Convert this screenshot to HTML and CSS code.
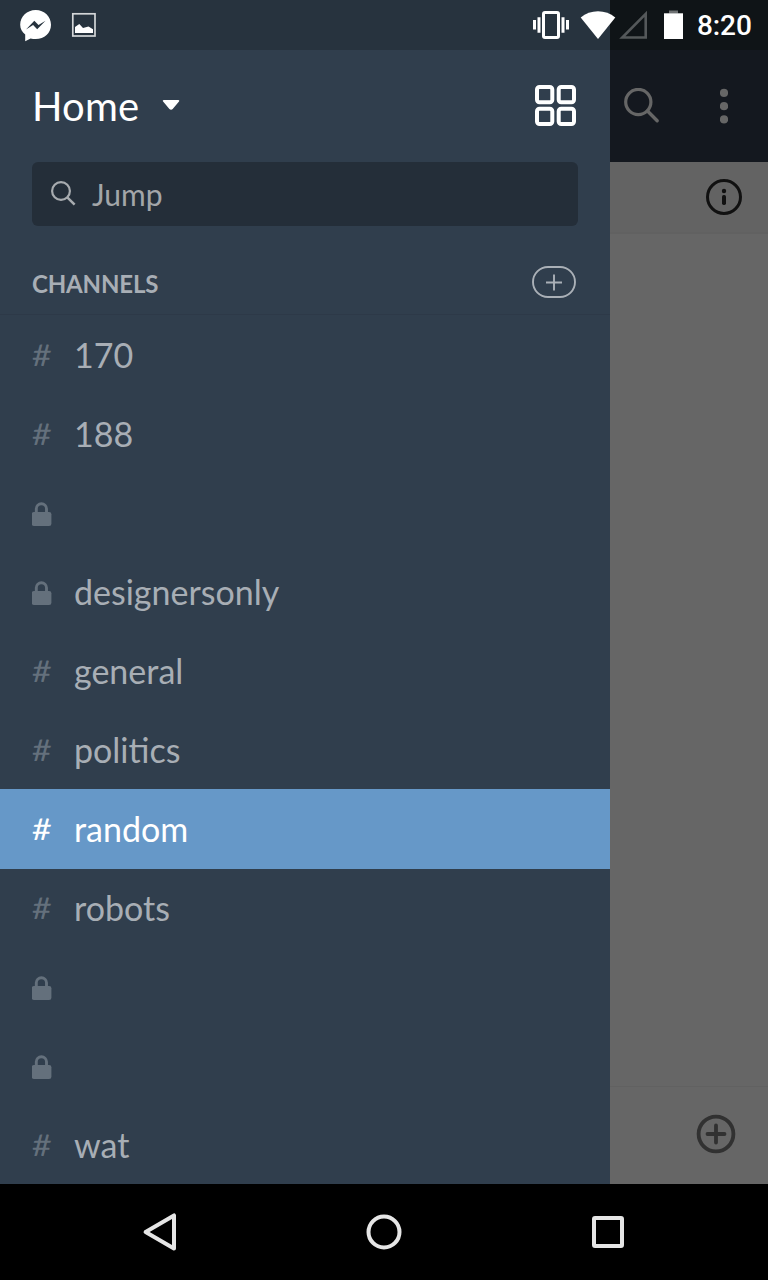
FILE: index.html
```html
<!DOCTYPE html>
<html lang="en">
<head>
<meta charset="utf-8">
<title>Channels</title>
<link rel="stylesheet" href="styles.css">
</head>
<body>
<svg class="defs" width="0" height="0" aria-hidden="true">
  <symbol id="lock" viewBox="0 0 20 24">
    <path d="M4.300 11V6.800a5.100 5.100 0 0 1 10.200 0v4.200" fill="none" stroke="currentColor" stroke-width="2.900"/>
    <rect x="-0.300" y="10" width="19.700" height="14" rx="2.300" fill="currentColor"/>
  </symbol>
</svg>
<header class="status">
  <svg class="status-left" width="80" height="50" viewBox="20 0 80 50">
    <path fill="#fff" d="M35.700 10C27 10 20.200 16.400 20.200 24.700c0 4 1.900 7.400 5 9.900v6.700l5.400-2.800c1.600.4 3.300.6 5.100.6 8.700 0 15.300-6.200 15.300-14.400S44.400 10 35.700 10z"/>
    <path fill="#27333e" d="M26 29.500l8.300-8.800 4.200 4.200 7-4.200-8.300 8.500-4.100-4.200z"/>
    <rect x="72.800" y="13.800" width="22.200" height="22.200" fill="none" stroke="#d3d6d8" stroke-width="1.700"/>
    <path fill="#fff" d="M75 33v-6l4.300-3 3.700 4 5.500-1.500 4.500 2.700V33z"/>
  </svg>
  <svg class="status-right" width="154" height="50" viewBox="532 0 154 50">
    <rect x="543.500" y="12.500" width="15" height="25" rx="1.500" fill="none" stroke="#fff" stroke-width="3"/>
    <path d="M534.500 20v9.500M567.500 20v9.500" stroke="#fff" stroke-width="3"/>
    <path d="M539 17.300v15.500M563 17.300v15.500" stroke="#fff" stroke-width="3"/>
    <path fill="#fff" d="M598 39l-17.300-21.500c9.500-8.500 25.100-8.500 34.600 0z"/>
    <path fill="none" stroke="#54585a" stroke-width="2.600" d="M622.300 37.500H645.700V13.800z"/>
    <path fill="#6f7274" d="M669 10.500h9v3h-9z"/>
    <path fill="#fff" d="M664 13.300h19V39h-19z"/>
  </svg>
  <span class="clock">8:20</span>
</header>
<main class="app">
  <aside class="drawer">
    <div class="team">
      <span class="team-name">Home</span>
      <svg class="caret" width="18" height="12" viewBox="0 0 18 12"><path fill="#fff" d="M1.800 1h14.500c1 0 1.300.9.700 1.600l-6.300 7.400c-.9 1-2.400 1-3.300 0L1.100 2.600C.5 1.900.8 1 1.800 1z"/></svg>
      <svg class="grid-icon" width="42" height="42" viewBox="0 0 42 42" fill="none" stroke="#fff" stroke-width="4">
        <rect x="2" y="2" width="15.300" height="15.300" rx="2.500"/><rect x="23.700" y="2" width="15.300" height="15.300" rx="2.500"/>
        <rect x="2" y="23.700" width="15.300" height="15.300" rx="2.500"/><rect x="23.700" y="23.700" width="15.300" height="15.300" rx="2.500"/>
      </svg>
    </div>
    <div class="jump">
      <svg width="26" height="26" viewBox="0 0 26 26" fill="none" stroke="#a8acb0" stroke-width="2.200"><circle cx="11" cy="10" r="8.900"/><path d="M17.300 16.300l7.300 7.300" stroke-width="2.500"/></svg>
      <span>Jump</span>
    </div>
    <div class="section">
      <h2>CHANNELS</h2>
      <svg width="44" height="32" viewBox="0 0 44 32" fill="none" stroke="#aab0b7" stroke-width="1.900"><rect x="1" y="1" width="42" height="30" rx="15"/><path d="M14 16.500h16M22 8.500v16"/></svg>
    </div>
    <ul class="channels">
      <li><span class="hash">#</span><span class="name">170</span></li>
      <li><span class="hash">#</span><span class="name">188</span></li>
      <li><svg class="lock"><use href="#lock"/></svg></li>
      <li><svg class="lock"><use href="#lock"/></svg><span class="name">designersonly</span></li>
      <li><span class="hash">#</span><span class="name">general</span></li>
      <li><span class="hash">#</span><span class="name">politics</span></li>
      <li class="active"><span class="hash">#</span><span class="name">random</span></li>
      <li><span class="hash">#</span><span class="name">robots</span></li>
      <li><svg class="lock"><use href="#lock"/></svg></li>
      <li><svg class="lock"><use href="#lock"/></svg></li>
      <li><span class="hash">#</span><span class="name">wat</span></li>
    </ul>
  </aside>
  <section class="behind">
    <div class="toolbar">
      <svg width="36" height="36" viewBox="0 0 36 36" fill="none" stroke="#666" stroke-width="3.200"><circle cx="14.300" cy="14" r="12.600"/><path d="M23.500 23l9.700 9.700" stroke-width="3.400" stroke-linecap="round"/></svg>
      <svg width="8" height="36" viewBox="0 0 8 36" fill="#666"><circle cx="4" cy="4.800" r="4.100"/><circle cx="4" cy="18.100" r="4.100"/><circle cx="4" cy="31.400" r="4.100"/></svg>
    </div>
    <div class="topic">
      <svg width="36" height="36" viewBox="0 0 36 36"><circle cx="18" cy="18" r="16.500" fill="none" stroke="#111" stroke-width="3"/><circle cx="18" cy="12" r="2.200" fill="#111"/><rect x="16" y="16" width="4" height="10" rx="1.700" fill="#111"/></svg>
    </div>
    <div class="messages"></div>
    <div class="composer">
      <svg width="40" height="40" viewBox="0 0 40 40" fill="none" stroke="#313131" stroke-width="3.800"><circle cx="20" cy="20" r="17.400"/><path d="M11.500 20h17M20 11.500v17" stroke-linecap="round"/></svg>
    </div>
  </section>
</main>
<nav class="navbar">
  <svg width="34" height="40" viewBox="-1 0 34 40"><path d="M2.600 20L31 3.400v33.200z" fill="none" stroke="#e6e6e6" stroke-width="4" stroke-linejoin="round"/></svg>
  <svg width="36" height="36" viewBox="0 0 36 36"><circle cx="18" cy="18" r="15.500" fill="none" stroke="#e6e6e6" stroke-width="4"/></svg>
  <svg width="32" height="32" viewBox="0 0 32 32"><rect x="2" y="2" width="28" height="28" rx="1" fill="none" stroke="#e6e6e6" stroke-width="4"/></svg>
</nav>
</body>
</html>
```
FILE: styles.css
```css
* { box-sizing: border-box; }

body {
  margin: 0;
  width: 768px;
  height: 1280px;
  display: flex;
  flex-direction: column;
  overflow: hidden;
  font-family: Lato, sans-serif;
  background: #000;
}

svg { display: block; flex: none; }
.defs { position: absolute; }

.status {
  height: 50px;
  display: flex;
  align-items: center;
  padding: 0 16px 0 20px;
  background: linear-gradient(to right, #27333e 610px, #0f1417 610px);
}
.status-right { margin-left: auto; }
.clock {
  width: 55px;
  margin-left: 11px;
  font: 500 28px/50px Roboto, sans-serif;
  letter-spacing: -0.1px;
  padding-top: 2px;
  color: #fff;
  white-space: nowrap;
}

.app { display: flex; height: 1134px; }

.drawer {
  width: 610px;
  background: #303e4d;
  color: #a8aeb5;
}

.team {
  height: 112px;
  display: flex;
  align-items: center;
  padding: 0 33px 0 32px;
}
.team-name {
  width: 130px;
  font-size: 40px;
  line-height: 48px;
  letter-spacing: 0.2px;
  color: #fff;
}
.caret { margin-top: -3px; }
.grid-icon { margin-left: auto; }

.jump {
  height: 64px;
  margin: 0 32px;
  padding: 0 18px;
  display: flex;
  align-items: center;
  gap: 16px;
  border-radius: 6px;
  background: #242e39;
  color: #a3a6a9;
  font-size: 30px;
}

.section {
  height: 89px;
  display: flex;
  justify-content: space-between;
  align-items: center;
  padding: 24px 34px 0 32px;
  border-bottom: 1px solid #2d3948;
}
.section h2 {
  margin: 3px 0 0;
  font-size: 24px;
  line-height: 30px;
  letter-spacing: -0.15px;
}

.channels { margin: 0; padding: 0; list-style: none; }
.channels li {
  height: 79px;
  display: flex;
  align-items: center;
  padding-left: 32px;
}
.name { padding-top: 1px; font-size: 34px; line-height: 42px; }
.hash {
  width: 17px;
  margin-right: 25px;
  padding-bottom: 2px;
  font-size: 30px;
  line-height: 36px;
  color: #64707c;
  transform: translateX(1px) scaleX(1.13) skewX(-2deg);
}
.lock { width: 20px; height: 24px; margin: 2px 22px 0 0; color: #64707c; overflow: visible; }
.channels .active,
.active .hash { color: #fff; }
.channels .active { background: #6698c8; box-shadow: 0 1px #6698c8; }

.behind {
  flex: 1;
  display: flex;
  flex-direction: column;
  background: #666;
}
.toolbar {
  height: 112px;
  display: flex;
  align-items: center;
  justify-content: space-between;
  padding: 0 40px 0 14px;
  background: #14181f;
}
.topic {
  height: 72px;
  display: flex;
  justify-content: flex-end;
  padding: 17px 26px 0;
  background: #636363;
  border-bottom: 2px solid #616161;
}
.messages { flex: 1; }
.composer {
  height: 98px;
  display: flex;
  justify-content: flex-end;
  align-items: center;
  padding: 0 32px 4px 0;
  border-top: 1px solid #616161;
}

.navbar {
  height: 96px;
  display: flex;
  justify-content: space-between;
  align-items: center;
  padding: 0 144px 0 142px;
  background: #000;
}
```
